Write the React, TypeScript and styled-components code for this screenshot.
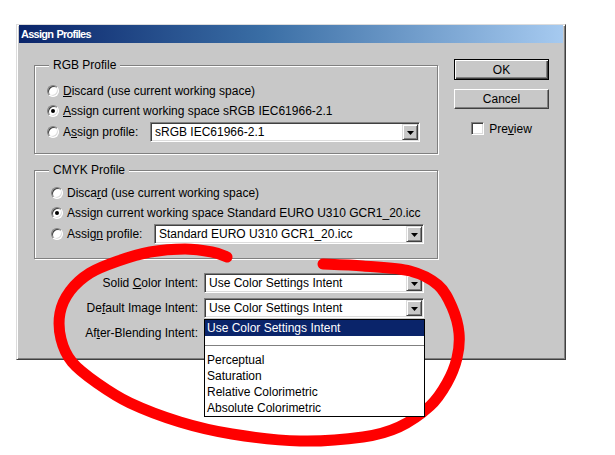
import React from 'react';
import styled, { createGlobalStyle } from 'styled-components';

const FACE = '#c8c8c8';

const GlobalStyle = createGlobalStyle`
  html, body {
    margin: 0;
    padding: 0;
    background: #fff;
  }
  body {
    font-family: "Liberation Sans", Arial, sans-serif;
  }
`;

const Page = styled.div`
  position: relative;
  width: 615px;
  height: 455px;
  padding: 24px 0 0 16px;
  box-sizing: border-box;
  overflow: hidden;
  background: #fff;
`;

const Window = styled.div`
  width: 550px;
  height: 336px;
  box-sizing: border-box;
  display: flex;
  flex-direction: column;
  padding: 0 2px 2px 2px;
  background: ${FACE};
  border: 1px solid;
  border-color: #dcdcdc #404040 #404040 #dcdcdc;
  box-shadow: inset 1px 1px 0 #fff, inset -1px -1px 0 #808080;
  font-size: 12px;
  color: #000;
`;

const TitleBar = styled.div`
  height: 18px;
  line-height: 18px;
  padding-left: 2px;
  background: linear-gradient(90deg, #0a246a 0%, #3a6ea5 45%, #a6caf0 100%);
  color: #fff;
  font-weight: bold;
  font-size: 11px;
  letter-spacing: -0.75px;
  word-spacing: 1px;
`;

const Content = styled.div`
  flex: 1;
  display: flex;
  gap: 16px;
  padding: 16px 14px 0 15px;
`;

const LeftColumn = styled.div`
  width: 404px;
  display: flex;
  flex-direction: column;
`;

const RightColumn = styled.div`
  width: 95px;
  display: flex;
  flex-direction: column;
`;

const GroupBox = styled.div<{ $mt: number }>`
  margin-top: ${p => p.$mt}px;
  height: 89px;
  box-sizing: border-box;
  border: 1px solid #808080;
  box-shadow: 1px 1px 0 #fff, inset 1px 1px 0 #fff;
`;

const Legend = styled.div`
  width: fit-content;
  margin: -8px 0 0 14px;
  padding: 0 4px;
  line-height: 14px;
  background: ${FACE};
`;

const Rows = styled.div<{ $top: number; $inset: number }>`
  display: flex;
  flex-direction: column;
  padding: ${p => p.$top}px 0 0 ${p => 12 + p.$inset}px;
`;

const RadioRow = styled.div<{ $h?: number }>`
  display: flex;
  align-items: center;
  height: ${p => p.$h ?? 20}px;
  white-space: nowrap;
`;

const RadioCircle = styled.span<{ $on?: boolean }>`
  position: relative;
  width: 12px;
  height: 12px;
  box-sizing: border-box;
  margin-right: 4px;
  flex: none;
  border-radius: 50%;
  border: 1px solid;
  border-color: #808080 #fff #fff #808080;
  box-shadow: inset 1px 1px 0 #404040, inset -1px -1px 0 #dcdcdc;
  background: #fff;

  &::after {
    content: '';
    display: ${p => (p.$on ? 'block' : 'none')};
    position: absolute;
    left: 3px;
    top: 3px;
    width: 4px;
    height: 4px;
    border-radius: 50%;
    background: #000;
  }
`;

const Key = styled.span`
  text-decoration: underline;
  text-underline-offset: 1px;
`;

const ProfileLabel = styled.span`
  width: 87px;
  flex: none;
`;

const Combo = styled.div<{ $w: number }>`
  width: ${p => p.$w}px;
  height: 20px;
  box-sizing: border-box;
  display: flex;
  padding: 1px;
  border: 1px solid;
  border-color: #808080 #fff #fff #808080;
  box-shadow: inset 1px 1px 0 #404040, inset -1px -1px 0 #dcdcdc;
  background: #fff;
`;

const ComboText = styled.span`
  flex: 1;
  padding-left: 3px;
  line-height: 16px;
  overflow: hidden;
  white-space: nowrap;
`;

const DropButton = styled.span`
  width: 16px;
  height: 16px;
  box-sizing: border-box;
  display: flex;
  align-items: center;
  justify-content: center;
  padding-top: 1px;
  background: ${FACE};
  border: 1px solid;
  border-color: #dcdcdc #404040 #404040 #dcdcdc;
  box-shadow: inset 1px 1px 0 #fff, inset -1px -1px 0 #808080;
`;

const IntentGrid = styled.div`
  position: relative;
  margin-top: 14px;
  display: grid;
  grid-template-columns: 164px 220px;
  grid-auto-rows: 20px;
  column-gap: 6px;
  row-gap: 5px;
`;

const IntentLabel = styled.span`
  text-align: right;
  line-height: 20px;
  white-space: nowrap;
`;

const DropList = styled.div`
  position: absolute;
  top: 46px;
  left: 170px;
  width: 221px;
  box-sizing: border-box;
  border: 1px solid #000;
  background: #fff;
  z-index: 1;
`;

const ListItem = styled.div<{ $active?: boolean }>`
  height: 16px;
  line-height: 16px;
  padding-left: 2px;
  white-space: nowrap;
  background: ${p => (p.$active ? '#0a246a' : 'transparent')};
  color: ${p => (p.$active ? '#fff' : '#000')};
`;

const ListSeparator = styled.div`
  height: 16px;
  box-sizing: border-box;
  padding-top: 9px;

  &::after {
    content: '';
    display: block;
    height: 1px;
    background: #808080;
  }
`;

const Button = styled.div<{ $default?: boolean; $mt?: number; $h: number }>`
  height: ${p => p.$h}px;
  margin-top: ${p => p.$mt ?? 0}px;
  box-sizing: border-box;
  display: flex;
  align-items: center;
  justify-content: center;
  background: ${FACE};
  border: 1px solid;
  border-color: ${p => (p.$default ? '#000' : '#fff #404040 #404040 #fff')};
  box-shadow: ${p =>
    p.$default
      ? 'inset 1px 1px 0 #fff, inset -1px -1px 0 #404040, inset -2px -2px 0 #808080'
      : 'inset -1px -1px 0 #808080'};
`;

const CheckRow = styled.div`
  margin-top: 13px;
  display: flex;
  align-items: center;
  justify-content: center;
  gap: 5px;
  height: 13px;
`;

const CheckBox = styled.span`
  width: 13px;
  height: 13px;
  box-sizing: border-box;
  border: 1px solid;
  border-color: #808080 #fff #fff #808080;
  box-shadow: inset 1px 1px 0 #404040, inset -1px -1px 0 #dcdcdc;
  background: #fff;
`;

const Scribble = styled.svg`
  position: absolute;
  left: 0;
  top: 0;
  pointer-events: none;
`;

// hand-drawn loop, in page coordinates
const loopPoints: [number, number][] = [
  [323, 264], [363, 266], [410, 271], [438, 285], [452, 307], [459, 333],
  [457, 358], [447, 383], [430, 406], [399, 427], [363, 437], [300, 441],
  [232, 434], [180, 422], [130, 403], [97, 383], [72, 362], [61, 339],
  [60, 313], [70, 291], [90, 273], [118, 261], [150, 252], [185, 249],
  [212, 252], [227, 257],
];

const smooth = (pts: [number, number][]) => {
  let d = `M${pts[0][0]} ${pts[0][1]}`;
  for (let i = 0; i < pts.length - 1; i++) {
    const p0 = pts[i - 1] || pts[i];
    const p1 = pts[i];
    const p2 = pts[i + 1];
    const p3 = pts[i + 2] || p2;
    const c1x = p1[0] + (p2[0] - p0[0]) / 6;
    const c1y = p1[1] + (p2[1] - p0[1]) / 6;
    const c2x = p2[0] - (p3[0] - p1[0]) / 6;
    const c2y = p2[1] - (p3[1] - p1[1]) / 6;
    d += ` C${c1x.toFixed(1)} ${c1y.toFixed(1)} ${c2x.toFixed(1)} ${c2y.toFixed(1)} ${p2[0]} ${p2[1]}`;
  }
  return d;
};

const loopPath = smooth(loopPoints);

const Arrow = () => (
  <svg width="7" height="4" viewBox="0 0 7 4">
    <polygon points="0,0 7,0 3.5,4" fill="#000" />
  </svg>
);

const ComboBox: React.FC<{ value: string; width: number }> = ({ value, width }) => (
  <Combo $w={width}>
    <ComboText>{value}</ComboText>
    <DropButton>
      <Arrow />
    </DropButton>
  </Combo>
);

interface ProfileGroupProps {
  title: string;
  mt: number;
  top: number;
  inset: number;
  profile: string;
  keys: [React.ReactNode, React.ReactNode, React.ReactNode];
}

const ProfileGroup: React.FC<ProfileGroupProps> = ({ title, mt, top, inset, profile, keys }) => (
  <GroupBox $mt={mt}>
    <Legend>{title}</Legend>
    <Rows $top={top} $inset={inset}>
      <RadioRow>
        <RadioCircle />
        <span>{keys[0]}</span>
      </RadioRow>
      <RadioRow>
        <RadioCircle $on />
        <span>{keys[1]} {profile}</span>
      </RadioRow>
      <RadioRow $h={22}>
        <RadioCircle />
        <ProfileLabel>{keys[2]}</ProfileLabel>
        <ComboBox value={profile} width={270} />
      </RadioRow>
    </Rows>
  </GroupBox>
);

const intentOptions = ['Perceptual', 'Saturation', 'Relative Colorimetric', 'Absolute Colorimetric'];

const App: React.FC = () => {
  return (
    <>
      <GlobalStyle />
      <Page>
        <Window>
          <TitleBar>Assign Profiles</TitleBar>
          <Content>
            <LeftColumn>
              <ProfileGroup
                title="RGB Profile"
                mt={6}
                top={9}
                inset={0}
                profile="sRGB IEC61966-2.1"
                keys={[
                  <><Key>D</Key>iscard (use current working space)</>,
                  <><Key>A</Key>ssign current working space</>,
                  <>A<Key>s</Key>sign profile:</>,
                ]}
              />
              <ProfileGroup
                title="CMYK Profile"
                mt={16}
                top={6}
                inset={4}
                profile="Standard EURO U310 GCR1_20.icc"
                keys={[
                  <>Disca<Key>r</Key>d (use current working space)</>,
                  <>Assi<Key>g</Key>n current working space</>,
                  <>Assig<Key>n</Key> profile:</>,
                ]}
              />
              <IntentGrid>
                <IntentLabel>Solid <Key>C</Key>olor Intent:</IntentLabel>
                <ComboBox value="Use Color Settings Intent" width={220} />
                <IntentLabel>De<Key>f</Key>ault Image Intent:</IntentLabel>
                <ComboBox value="Use Color Settings Intent" width={220} />
                <IntentLabel>Af<Key>t</Key>er-Blending Intent:</IntentLabel>
                {/* covered by the open list below */}
                <ComboBox value="" width={220} />
                <DropList>
                  <ListItem $active>Use Color Settings Intent</ListItem>
                  <ListSeparator />
                  {intentOptions.map(o => (
                    <ListItem key={o}>{o}</ListItem>
                  ))}
                </DropList>
              </IntentGrid>
            </LeftColumn>
            <RightColumn>
              <Button $default $h={21}>OK</Button>
              <Button $mt={9} $h={20}>Cancel</Button>
              <CheckRow>
                <CheckBox />
                <span>Pre<Key>v</Key>iew</span>
              </CheckRow>
            </RightColumn>
          </Content>
        </Window>
        <Scribble width="615" height="455" viewBox="0 0 615 455">
          <path
            d={loopPath}
            fill="none"
            stroke="#ff0000"
            strokeWidth={11}
            strokeLinecap="round"
            strokeLinejoin="round"
          />
        </Scribble>
      </Page>
    </>
  );
};

export default App;
